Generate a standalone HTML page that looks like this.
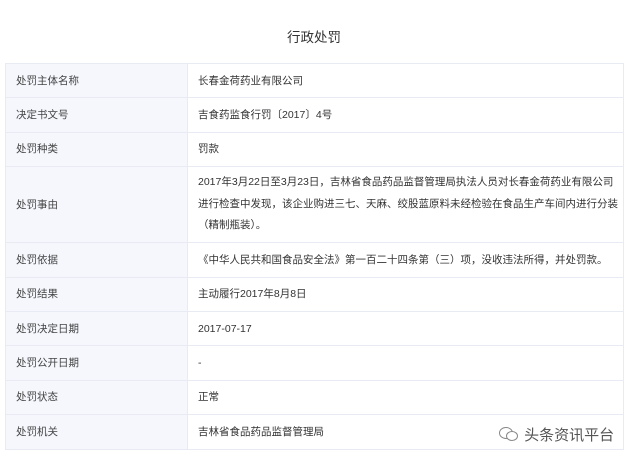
<!DOCTYPE html>
<html><head><meta charset="utf-8"><style>
body{margin:0;width:641px;height:462px;background:#fff;font-family:"Liberation Sans","Noto Sans CJK SC",sans-serif;color:#333;overflow:hidden;position:relative}
.t{position:absolute;top:26px;left:0;width:628px;text-align:center;font-size:13.5px;color:#333}
table{position:absolute;left:5px;top:63px;width:619px;border-collapse:collapse;font-size:10.5px;table-layout:fixed}
td{border:1px solid #e8ebf3;padding:0 0 0 10px;height:33.4px;vertical-align:middle;line-height:14px}
td.l{width:171px;background:#f5f7fd;color:#444}
td.v{color:#333;white-space:nowrap}
.wm{position:absolute;left:498px;top:424px;font-size:15px;color:#555;background:rgba(255,255,255,.6)}
</style></head><body>
<div class="t">行政处罚</div>
<table>
<tr><td class="l">处罚主体名称</td><td class="v">长春金荷药业有限公司</td></tr>
<tr><td class="l">决定书文号</td><td class="v">吉食药监食行罚〔2017〕4号</td></tr>
<tr><td class="l">处罚种类</td><td class="v">罚款</td></tr>
<tr><td class="l" style="height:75px">处罚事由</td><td class="v" style="line-height:21.5px">2017年3月22日至3月23日，吉林省食品药品监督管理局执法人员对长春金荷药业有限公司<br>进行检查中发现，该企业购进三七、天麻、绞股蓝原料未经检验在食品生产车间内进行分装<br>（精制瓶装）。</td></tr>
<tr><td class="l">处罚依据</td><td class="v">《中华人民共和国食品安全法》第一百二十四条第（三）项，没收违法所得，并处罚款。</td></tr>
<tr><td class="l">处罚结果</td><td class="v">主动履行2017年8月8日</td></tr>
<tr><td class="l">处罚决定日期</td><td class="v">2017-07-17</td></tr>
<tr><td class="l">处罚公开日期</td><td class="v">-</td></tr>
<tr><td class="l">处罚状态</td><td class="v">正常</td></tr>
<tr><td class="l">处罚机关</td><td class="v">吉林省食品药品监督管理局</td></tr>
</table>
<div class="wm"><svg width="22" height="16" viewBox="0 0 22 16" style="vertical-align:-2px"><ellipse cx="8" cy="7" rx="6.5" ry="5.5" fill="none" stroke="#888" stroke-width="1"/><ellipse cx="14" cy="10" rx="5.5" ry="4.5" fill="#fff" stroke="#888" stroke-width="1"/></svg> 头条资讯平台</div>
</body></html>
